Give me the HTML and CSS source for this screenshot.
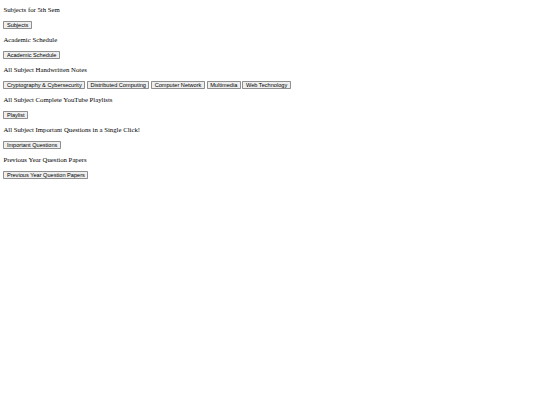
FILE: index.html
```html
<!DOCTYPE html>
<html>
<head>
<meta charset="utf-8">
<title>5th Sem</title>
<link rel="stylesheet" href="styles.css">
</head>
<body>
<main class="page">
  <p class="label">Subjects for 5th Sem</p>
  <div class="row"><button class="btn">Subjects</button></div>

  <p class="label">Academic Schedule</p>
  <div class="row"><button class="btn">Academic Schedule</button></div>

  <p class="label">All Subject Handwritten Notes</p>
  <div class="row">
    <button class="btn">Cryptography &amp; Cybersecurity</button>
    <button class="btn">Distributed Computing</button>
    <button class="btn">Computer Network</button>
    <button class="btn">Multimedia</button>
    <button class="btn">Web Technology</button>
  </div>

  <p class="label">All Subject Complete YouTube Playlists</p>
  <div class="row"><button class="btn">Playlist</button></div>

  <p class="label">All Subject Important Questions in a Single Click!</p>
  <div class="row"><button class="btn">Important Questions</button></div>

  <p class="label">Previous Year Question Papers</p>
  <div class="row"><button class="btn">Previous Year Question Papers</button></div>
</main>
</body>
</html>
```
FILE: styles.css
```css
html, body {
  background: #ffffff;
}
body {
  margin: 0;
  font-family: "Liberation Serif", "Times New Roman", serif;
  font-size: 6.75px;
  color: #000000;
}
.page {
  display: flex;
  flex-direction: column;
  align-items: flex-start;
  gap: 6.69px;
  padding: 6.2px 3.375px 0;
}
.label {
  margin: 0;
  height: 7.76px;
  line-height: 7.76px;
}
.row {
  display: flex;
  flex-wrap: wrap;
  align-items: center;
  gap: 1.69px;
  height: 8.86px;
}
.btn {
  box-sizing: border-box;
  height: 8.86px;
  font-family: "Liberation Sans", Arial, sans-serif;
  font-size: 5.625px;
  line-height: 6.33px;
  padding: 0 2.53px;
  border: 0.84px solid #8f8f8f;
  border-radius: 0.8px;
  background: #efefef;
  color: #000000;
  margin: 0;
}
```
